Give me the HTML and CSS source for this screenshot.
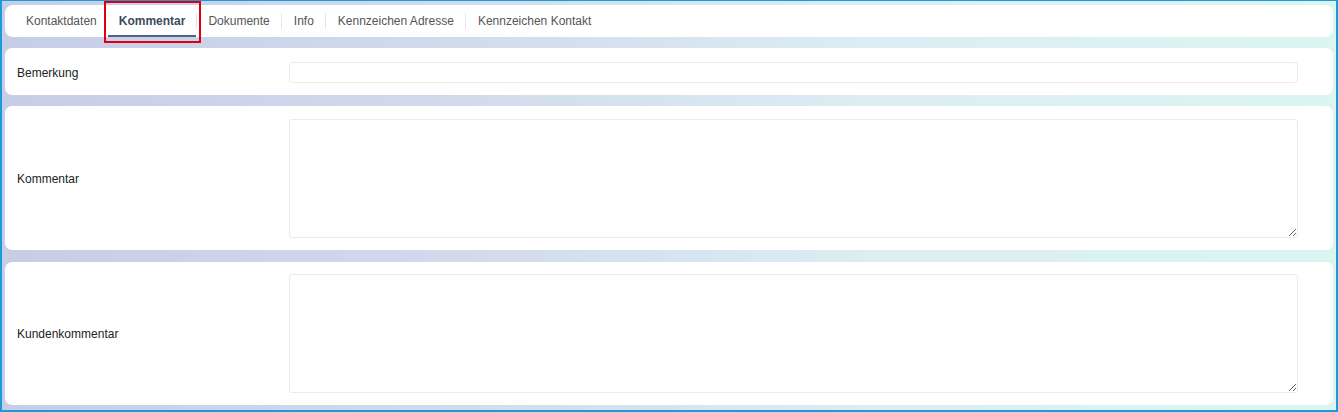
FILE: index.html
```html
<!DOCTYPE html>
<html lang="de">
<head>
    <meta charset="UTF-8">
    <meta name="viewport" content="width=device-width, initial-scale=1.0">
    <title>Kommentar</title>
    <link rel="stylesheet" href="styles.css">
</head>
<body>
    <div class="frame">
        <div class="tab-bar">
            <div class="tab">Kontaktdaten</div>
            <div class="tab active">Kommentar</div>
            <div class="tab">Dokumente</div>
            <div class="tab">Info</div>
            <div class="tab">Kennzeichen Adresse</div>
            <div class="tab">Kennzeichen Kontakt</div>
        </div>

        <div class="card card-input">
            <label class="field-label" for="bemerkung">Bemerkung</label>
            <input type="text" id="bemerkung" class="field-input">
        </div>

        <div class="card card-text">
            <label class="field-label" for="kommentar">Kommentar</label>
            <textarea id="kommentar" class="field-text"></textarea>
        </div>

        <div class="card card-text last">
            <label class="field-label" for="kundenkommentar">Kundenkommentar</label>
            <textarea id="kundenkommentar" class="field-text"></textarea>
        </div>
    </div>
</body>
</html>
```

FILE: styles.css
```css
html, body {
    margin: 0;
    padding: 0;
}

body {
    font-family: "Liberation Sans", Arial, sans-serif;
    font-size: 12px;
    color: #222;
}

.frame {
    box-sizing: border-box;
    width: 1338px;
    height: 412px;
    border: 2px solid #1b9bd7;
    border-top-width: 1px;
    padding: 4px 3px 5px 3px;
    background: linear-gradient(90deg, #c6cde7 0%, #d2dbec 35%, #dcedf3 65%, #dcf5f1 100%);
    display: flex;
    flex-direction: column;
}

.tab-bar {
    height: 32px;
    background-color: #fff;
    border-radius: 8px;
    display: flex;
    align-items: stretch;
    padding-left: 10px;
    margin-bottom: 11px;
}

.tab {
    position: relative;
    display: flex;
    align-items: center;
    padding: 0 11px;
    color: #555;
    cursor: pointer;
}

.tab + .tab {
    padding-left: 13px;
}

.tab + .tab::before {
    content: "";
    position: absolute;
    left: 0;
    top: 8px;
    height: 16px;
    border-left: 1px solid #e6e6e6;
}

.tab.active {
    padding-left: 11px;
    font-weight: bold;
    color: #3c4a5e;
    box-shadow: inset 0 -2px 0 #4d6482;
}

.tab.active + .tab {
    padding-left: 12px;
}

.tab.active::before {
    display: none;
}

.tab.active::after {
    content: "";
    position: absolute;
    left: -4px;
    right: -5px;
    top: -4px;
    bottom: -6px;
    border: 2px solid #e0000d;
}

.card {
    background-color: #fff;
    border-radius: 7px;
    display: grid;
    grid-template-columns: 272px 1fr;
    align-items: center;
    padding: 0 35px 0 12px;
}

.card-input {
    padding-top: 14px;
    padding-bottom: 12px;
    margin-bottom: 11px;
}

.card-text {
    padding-top: 13px;
    padding-bottom: 12px;
    margin-bottom: 12px;
}

.card-text.last {
    padding-top: 12px;
    margin-bottom: 0;
}

.field-label {
    color: #222;
}

.field-input,
.field-text {
    box-sizing: border-box;
    width: 100%;
    border: 1px solid #ebebeb;
    border-radius: 3px;
    background-color: #fff;
    font-family: inherit;
    font-size: 12px;
    margin: 0;
    outline: none;
}

.field-input {
    height: 21px;
    padding: 2px 6px;
}

.field-text {
    display: block;
    height: 119px;
    padding: 4px 6px;
}
```
